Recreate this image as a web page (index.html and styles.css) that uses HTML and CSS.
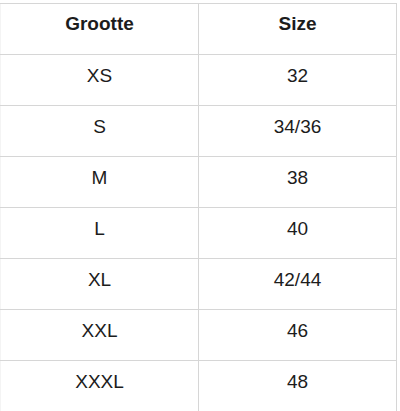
FILE: index.html
```html
<!DOCTYPE html>
<html>
<head>
<meta charset="utf-8">
<link rel="stylesheet" href="styles.css">
</head>
<body>
<div class="wrap">
<table class="sizes">
  <thead>
    <tr><th>Grootte</th><th>Size</th></tr>
  </thead>
  <tbody>
    <tr><td>XS</td><td>32</td></tr>
    <tr><td>S</td><td>34/36</td></tr>
    <tr><td>M</td><td>38</td></tr>
    <tr><td>L</td><td>40</td></tr>
    <tr><td>XL</td><td>42/44</td></tr>
    <tr><td>XXL</td><td>46</td></tr>
    <tr><td>XXXL</td><td>48</td></tr>
  </tbody>
</table>
</div>
</body>
</html>
```
FILE: styles.css
```css
html, body {
  margin: 0;
  padding: 0;
  background: #ffffff;
}
.wrap {
  padding-top: 3px;
}
.sizes {
  border-collapse: collapse;
  width: 397px;
  table-layout: fixed;
  font-family: "Liberation Sans", Arial, sans-serif;
  color: #1c1c1c;
}
.sizes th,
.sizes td {
  border: 1px solid #d6d6d6;
  height: 50px;
  box-sizing: border-box;
  padding: 0 0 9px;
  text-align: center;
  vertical-align: top;
}
.sizes tr > :first-child {
  border-left-color: #f4f4f4;
}
.sizes th {
  font-size: 19px;
  font-weight: bold;
  line-height: 40px;
  padding-bottom: 10px;
}
.sizes td {
  font-size: 19px;
  font-weight: normal;
  line-height: 41px;
}
```
